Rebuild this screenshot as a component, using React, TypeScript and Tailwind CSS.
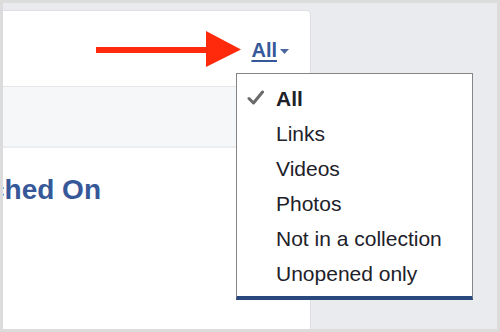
import React from "react";

const items = ["All", "Links", "Videos", "Photos", "Not in a collection", "Unopened only"];

export default function App() {
  return (
    <div className="relative w-[500px] h-[332px] bg-[#dcdcdc] p-[3px] overflow-hidden" style={{ fontFamily: '"Liberation Sans", Arial, sans-serif' }}>
      <div className="w-full h-full bg-[#e9ebee] flex">
        <div className="mt-[7px] w-[308px] bg-white rounded-tr-[5px] border-r border-t border-[#dddfe2] flex flex-col">
          <div className="h-[75px] flex justify-end items-start pt-[27px] pr-[21px]">
            <div className="flex items-center h-[24px]">
              <span className="text-[20px] leading-[24px] font-bold text-[#365899] underline decoration-[1.5px] underline-offset-[3px]">All</span>
              <svg width="9" height="5" viewBox="0 0 9 5" className="ml-[3px] mt-[2px]">
                <polygon points="0,0 9,0 4.5,5" fill="#4b67a1" />
              </svg>
            </div>
          </div>
          <div className="h-[62px] bg-[#f6f7f9] border-t border-[#e5e6e9] border-b-2 border-b-[#ebedf0]" />
          <div className="flex-1 pt-[25px]">
            <div className="w-[98px] flex justify-end overflow-hidden">
              <span className="whitespace-nowrap text-[28px] leading-[34px] font-bold text-[#365899]">Watched On</span>
            </div>
          </div>
        </div>
      </div>

      <svg className="absolute left-[96px] top-[31px]" width="146" height="37" viewBox="0 0 146 37">
        <rect x="0" y="16" width="113" height="6" fill="#ff2a0c" />
        <polygon points="110,0 145,18.5 110,36" fill="#ff2a0c" />
      </svg>

      <div className="absolute left-[236px] top-[73px] w-[237px] h-[227px] bg-white border border-[#858585] border-b-4 border-b-[#29487d] pt-[7px] pl-[39px]">
        <svg className="absolute left-[10px] top-[16px]" width="18" height="16" viewBox="0 0 18 16">
          <polyline points="2,8.5 6.5,13 15.5,2" fill="none" stroke="#6a6a6a" strokeWidth="3" strokeLinecap="round" strokeLinejoin="round" />
        </svg>
        {items.map((t, i) => (
          <div key={t} className={`h-[35px] text-[21px] leading-[35px] whitespace-nowrap text-[#1d2129] ${i === 0 ? "font-bold" : ""}`}>
            {t}
          </div>
        ))}
      </div>
    </div>
  );
}
